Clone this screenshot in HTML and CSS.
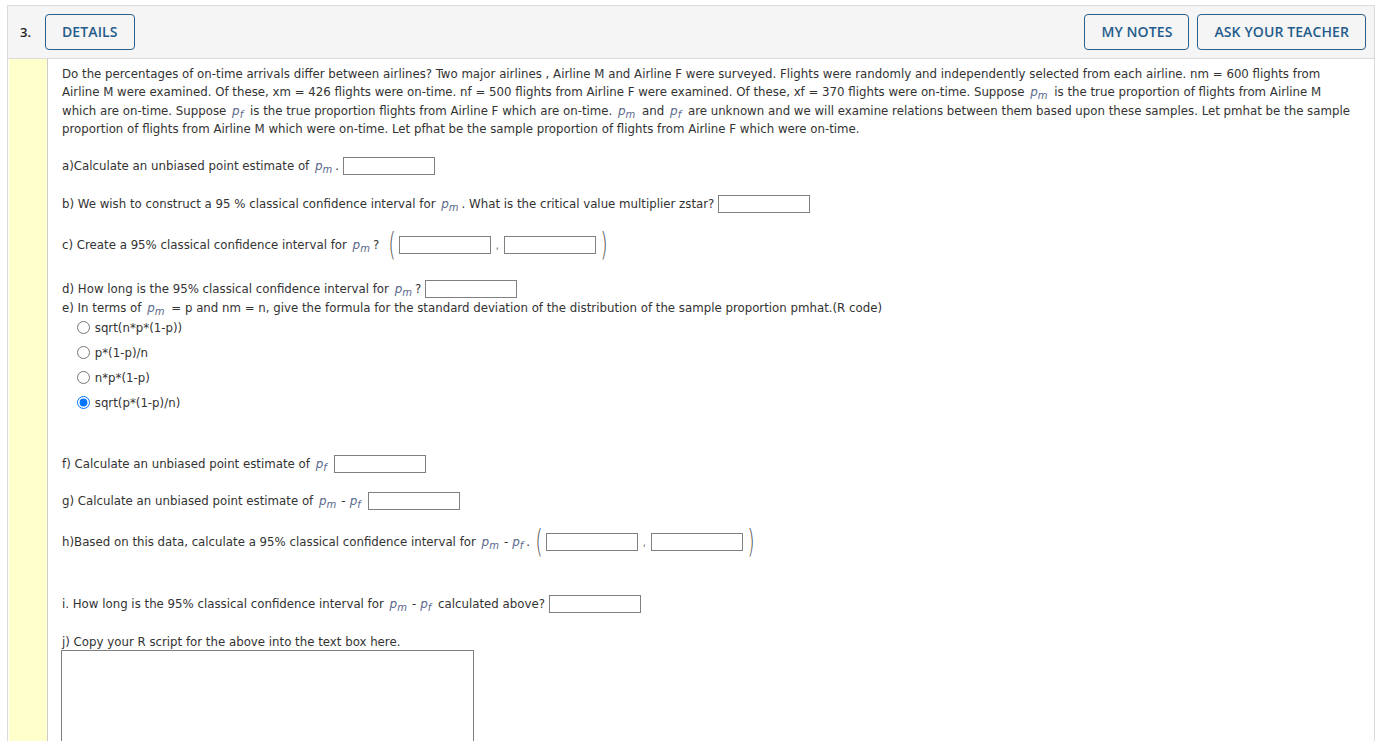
FILE: index.html
```html
<!DOCTYPE html>
<html>
<head>
<meta charset="utf-8">
<link rel="stylesheet" href="styles.css">
</head>
<body>
<div class="question">
  <div class="qhead">
    <span class="qnum">3.</span>
    <button class="btn">DETAILS</button>
    <div class="spacer"></div>
    <button class="btn">MY NOTES</button>
    <button class="btn">ASK YOUR TEACHER</button>
  </div>
  <div class="qbody">
    <div class="strip"></div>
    <div class="content">
      <p class="intro">Do the percentages of on-time arrivals differ between airlines? Two major airlines , Airline M and Airline F were surveyed. Flights were randomly and independently selected from each airline. nm = 600 flights from<br>Airline M were examined. Of these, xm = 426 flights were on-time. nf = 500 flights from Airline F were examined. Of these, xf = 370 flights were on-time. Suppose <span class="math"><i>p</i><sub>m</sub></span> is the true proportion of flights from Airline M<br>which are on-time. Suppose <span class="math"><i>p</i><sub>f</sub></span> is the true proportion flights from Airline F which are on-time. <span class="math"><i>p</i><sub>m</sub></span> and <span class="math"><i>p</i><sub>f</sub></span> are unknown and we will examine relations between them based upon these samples. Let pmhat be the sample<br>proportion of flights from Airline M which were on-time. Let pfhat be the sample proportion of flights from Airline F which were on-time.</p>

      <div class="row ra">a)Calculate an unbiased point estimate of <span class="math"><i>p</i><sub>m</sub></span>. <input class="box" type="text"></div>
      <div class="row rb">b) We wish to construct a 95 % classical confidence interval for <span class="math"><i>p</i><sub>m</sub></span>. What is the critical value multiplier zstar? <input class="box" type="text"></div>
      <div class="row rc tall">c) Create a 95% classical confidence interval for <span class="math"><i>p</i><sub>m</sub></span>? <span class="paren open">(</span><input class="box" type="text"><span class="comma">,</span><input class="box" type="text"><span class="paren">)</span></div>
      <div class="row rd">d) How long is the 95% classical confidence interval for <span class="math"><i>p</i><sub>m</sub></span>? <input class="box" type="text"></div>
      <div class="row re">e) In terms of <span class="math"><i>p</i><sub>m</sub></span> = p and nm = n, give the formula for the standard deviation of the distribution of the sample proportion pmhat.(R code)</div>
      <label class="row opt o1"><input type="radio" name="e"> sqrt(n*p*(1-p))</label>
      <label class="row opt"><input type="radio" name="e"> p*(1-p)/n</label>
      <label class="row opt"><input type="radio" name="e"> n*p*(1-p)</label>
      <label class="row opt"><input type="radio" name="e" checked> sqrt(p*(1-p)/n)</label>
      <div class="row rf">f) Calculate an unbiased point estimate of <span class="math"><i>p</i><sub>f</sub></span> <input class="box" type="text"></div>
      <div class="row rg">g) Calculate an unbiased point estimate of <span class="math"><i>p</i><sub>m</sub></span><span class="minus">-</span><span class="math"><i>p</i><sub>f</sub></span> <input class="box" type="text"></div>
      <div class="row rh tall">h)Based on this data, calculate a 95% classical confidence interval for <span class="math"><i>p</i><sub>m</sub></span><span class="minus">-</span><span class="math"><i>p</i><sub>f</sub></span>. <span class="paren open">(</span><input class="box" type="text"><span class="comma">,</span><input class="box" type="text"><span class="paren">)</span></div>
      <div class="row ri">i. How long is the 95% classical confidence interval for <span class="math"><i>p</i><sub>m</sub></span><span class="minus">-</span><span class="math"><i>p</i><sub>f</sub></span> calculated above? <input class="box" type="text"></div>
      <div class="row rj">j) Copy your R script for the above into the text box here.</div>
      <textarea class="script"></textarea>
    </div>
  </div>
</div>
</body>
</html>
```

FILE: styles.css
```css
html, body {
  margin: 0;
  padding: 0;
  background: #ffffff;
  overflow: hidden;
}
.question {
  margin: 5px 5px 0 7px;
  border: 1px solid #dcdcdc;
  border-bottom: none;
  font-family: "DejaVu Sans Condensed", "DejaVu Sans", sans-serif;
  color: #333333;
}
.qhead {
  display: flex;
  align-items: center;
  height: 52px;
  background: #f5f5f5;
  border-bottom: 1px solid #dcdcdc;
  padding: 0 8px 0 12px;
  gap: 8px;
}
.qnum {
  font-family: "Open Sans", sans-serif;
  font-weight: 600;
  font-size: 13px;
  color: #222;
  width: 17px;
  padding-bottom: 1px;
}
.spacer { flex: 1; }
.btn {
  height: 36px;
  padding: 0 16px 2px 16px;
  background: #ffffff00;
  border: 1px solid #2b5f8c;
  border-radius: 4px;
  color: #245c8c;
  font-family: "Open Sans", sans-serif;
  font-weight: 600;
  font-size: 14px;
  letter-spacing: 0.1px;
}
.qbody {
  display: flex;
  padding-left: 1px;
}
.strip {
  width: 38px;
  flex: none;
  background: #ffffcc;
  border-right: 1px solid #cccccc;
}
.content {
  flex: 1;
  padding: 5.5px 10px 0 14px;
  font-size: 13.1px;
  line-height: 18.6px;
  height: 700px;
}
.intro {
  margin: 0;
  white-space: nowrap;
}
.math {
  color: #5a678c;
  margin: 0 3px 0 2px;
  font-family: "DejaVu Sans", sans-serif;
  line-height: 1;
}
.math i {
  font-style: italic;
  font-size: 12px;
}
.math sub {
  font-style: italic;
  font-size: 10px;
  line-height: 0;
  vertical-align: baseline;
  position: relative;
  top: 3px;
}
.minus {
  margin: 0 2px;
}
.row {
  display: block;
  height: 19px;
  line-height: 19px;
  white-space: nowrap;
}
.row.tall { height: 30px; line-height: 30px; }
.ra { margin-top: 17px; }
.rb { margin-top: 19px; }
.rc { margin-top: 17px; }
.rd { margin-top: 19px; }
.re { margin-top: 0; }
.opt { margin-top: 6px; padding-left: 13px; }
.opt.o1 { margin-top: 1px; }
.opt input { margin: 0 1px 0 2px; width: 13px; height: 13px; vertical-align: middle; position: relative; top: -1px; }
.rf { margin-top: 42px; }
.rg { margin-top: 18px; }
.rh { margin-top: 17px; }
.ri { margin-top: 37px; }
.rj { margin-top: 19px; }
.box {
  box-sizing: border-box;
  width: 92px;
  height: 18px;
  border: 1px solid #808080;
  border-radius: 0;
  margin: 0;
  padding: 0;
  background: #fff;
  vertical-align: middle;
}
.paren {
  display: inline-block;
  font-family: "DejaVu Sans", sans-serif;
  font-weight: 200;
  font-size: 20px;
  color: #4a4a4a;
  transform: scale(0.9, 1.6);
  margin: 0 3px 0 4px;
  vertical-align: middle;
  line-height: 20px;
  position: relative;
  top: -1px;
}
.rc .paren.open { margin-left: 5px; }
.rh .paren.open { margin-left: 1px; }
.comma {
  color: #666;
  margin: 0 5px 0 5px;
  font-size: 11px;
}
.script {
  display: block;
  box-sizing: border-box;
  width: 413px;
  height: 120px;
  border: 1px solid #808080;
  margin: -1px 0 0 -1px;
  resize: none;
}
```
